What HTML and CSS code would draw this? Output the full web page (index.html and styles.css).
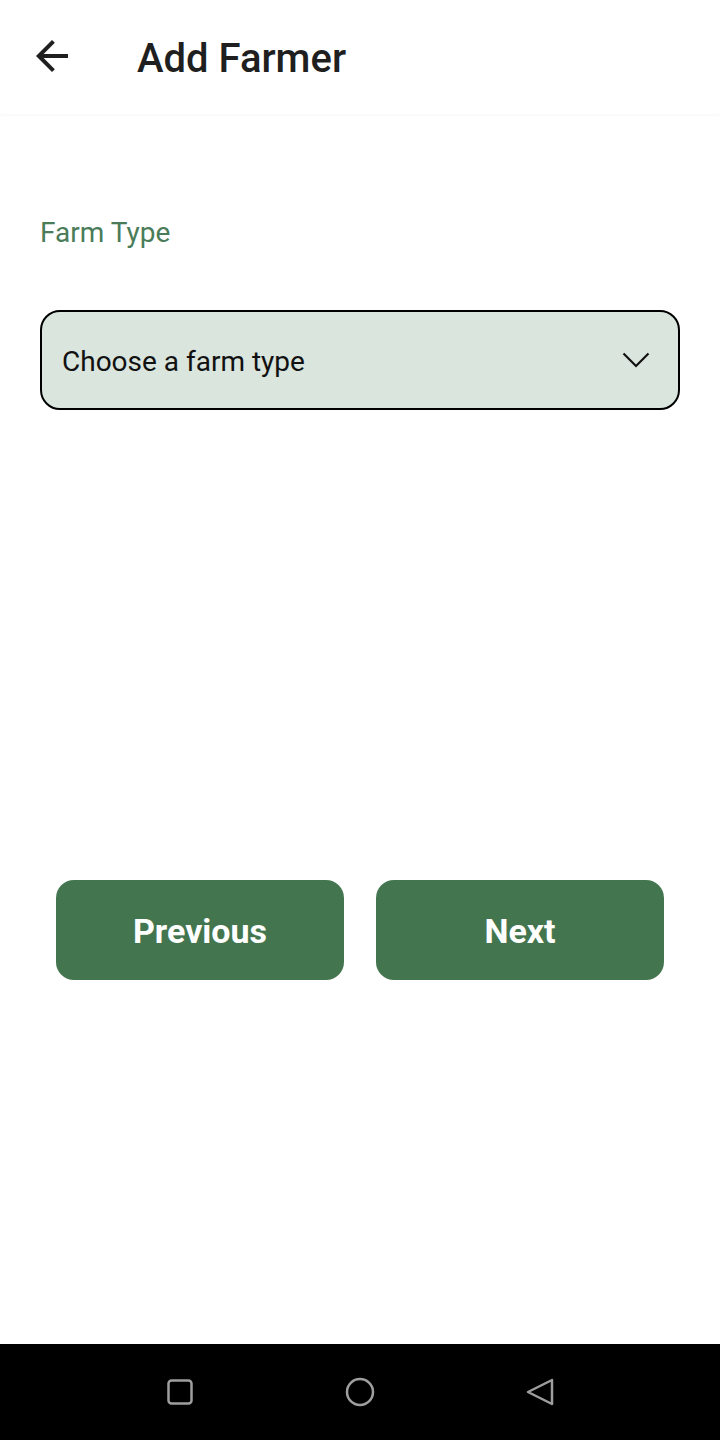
FILE: index.html
```html
<!DOCTYPE html>
<html lang="en">
<head>
<meta charset="utf-8">
<title>Add Farmer</title>
<link rel="stylesheet" href="styles.css">
</head>
<body>
<div class="screen">
  <header class="appbar">
    <button class="back" aria-label="Back">
      <svg width="48" height="48" viewBox="0 0 24 24"><path d="M20 11H7.83l5.59-5.59L12 4l-8 8 8 8 1.41-1.41L7.83 13H20v-2z" fill="#1f1f1f"/></svg>
    </button>
    <h1 class="title">Add Farmer</h1>
  </header>
  <main class="content">
    <label class="field-label">Farm Type</label>
    <div class="select">
      <span class="select-text">Choose a farm type</span>
      <svg class="chevron" width="28" height="16" viewBox="0 0 28 16"><polyline points="1.5,1.5 14,14 26.5,1.5" fill="none" stroke="#111" stroke-width="2.2"/></svg>
    </div>
    <div class="actions">
      <button class="btn">Previous</button>
      <button class="btn">Next</button>
    </div>
  </main>
  <nav class="navbar">
    <svg width="28" height="28" viewBox="0 0 28 28"><rect x="2.5" y="2.5" width="23" height="23" rx="3" fill="none" stroke="#9e9e9e" stroke-width="2.5"/></svg>
    <svg width="32" height="32" viewBox="0 0 32 32"><circle cx="16" cy="16" r="13" fill="none" stroke="#9e9e9e" stroke-width="2.5"/></svg>
    <svg width="32" height="32" viewBox="0 0 32 32"><path d="M28 4 L4 16 L28 28 Z" fill="none" stroke="#9e9e9e" stroke-width="2.5" stroke-linejoin="round"/></svg>
  </nav>
</div>
</body>
</html>
```
FILE: styles.css
```css
* { box-sizing: border-box; }
html, body { margin: 0; padding: 0; }
body {
  font-family: Roboto, "Liberation Sans", sans-serif;
  background: #ffffff;
  width: 720px;
  height: 1440px;
  overflow: hidden;
}
.screen {
  display: flex;
  flex-direction: column;
  height: 1440px;
}
.appbar {
  height: 114px;
  display: flex;
  align-items: center;
  background: #fff;
  box-shadow: 0 1px 3px rgba(0,0,0,0.04);
  padding-left: 28px;
  padding-bottom: 2px;
}
.back {
  border: 0;
  background: none;
  padding: 0;
  width: 48px;
  height: 48px;
  display: flex;
  margin-top: 0;
}
.title {
  margin: 4px 0 0 61px;
  font-size: 40px;
  font-weight: 500;
  color: #1f1f1f;
  letter-spacing: 0;
}
.content {
  flex: 1;
  display: flex;
  flex-direction: column;
  padding: 100px 40px 0;
}
.field-label {
  font-size: 28px;
  color: #4a7c59;
  line-height: 36px;
  height: 36px;
  padding-top: 1px;
}
.select {
  margin-top: 60px;
  height: 100px;
  border: 2px solid #000;
  border-radius: 20px;
  background: #dae5dd;
  display: flex;
  align-items: center;
  justify-content: space-between;
  padding: 2px 28px 0 20px;
}
.select-text {
  font-size: 28px;
  color: #111;
}
.chevron { margin-top: -2px; }
.actions {
  margin-top: 470px;
  display: flex;
  gap: 32px;
  padding: 0 16px;
}
.btn {
  flex: 1;
  height: 100px;
  border: 0;
  border-radius: 18px;
  background: #43764f;
  color: #fff;
  font-family: Roboto, "Liberation Sans", sans-serif;
  font-size: 34px;
  font-weight: 700;
  padding-top: 2px;
}
.navbar {
  height: 96px;
  background: #000;
  display: grid;
  grid-template-columns: repeat(3, 1fr);
  justify-items: center;
  align-items: center;
  padding: 0 90px;
}
```
